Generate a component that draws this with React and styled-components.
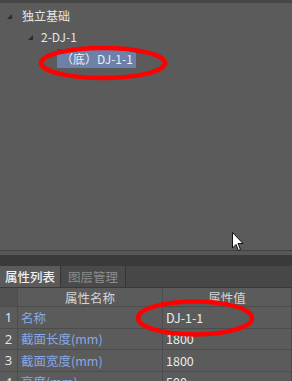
import React from 'react';
import styled, { createGlobalStyle } from 'styled-components';

const GlobalStyle = createGlobalStyle`
  html, body {
    margin: 0;
    padding: 0;
    background: #5b5b5b;
  }
  #root {
    height: 381px;
  }
`;

const Page = styled.div`
  position: relative;
  width: 292px;
  height: 381px;
  display: flex;
  flex-direction: column;
  overflow: hidden;
  font-family: 'Noto Sans CJK SC', 'Open Sans', sans-serif;
  font-size: 12px;
  & > * {
    flex-shrink: 0;
  }
`;

const TreePanel = styled.div`
  height: 250px;
  background: #5b5b5b;
  border-top: 3px solid #474747;
  padding-top: 2px;
  box-sizing: border-box;
`;

const TreeRow = styled.div`
  display: flex;
  align-items: center;
  height: 21px;
  padding-left: ${(p) => p.indent}px;
  color: #e6e6e6;
  white-space: nowrap;
`;

const Toggle = styled.span`
  width: 0;
  height: 0;
  border-left: 5px solid transparent;
  border-bottom: 5px solid #2b2b2b;
  margin-right: ${(p) => p.gap}px;
  margin-top: 2px;
`;

const Selected = styled.span`
  position: relative;
  display: inline-flex;
  align-items: center;
  height: 19px;
  padding: 0 3px 0 4px;
  background: #6c80aa;
  color: #eef0f5;
  margin-top: 2px;
  &::before {
    content: '';
    position: absolute;
    left: 0;
    top: 0;
    width: 6px;
    height: 3px;
    background: #3e4a63;
  }
`;

const Splitter = styled.div`
  height: 16px;
  border-top: 1px solid #424242;
  background: linear-gradient(#575757 0 4px, #3a3a3a 4px);
  box-sizing: border-box;
`;

const TabBar = styled.div`
  display: flex;
  height: 22px;
  background: #474747;
  border-bottom: 1px solid #3a3a3a;
  box-sizing: border-box;
`;

const Tab = styled.div`
  display: flex;
  align-items: center;
  justify-content: center;
  width: ${(p) => p.w}px;
  background: ${(p) => (p.active ? '#5b5b5b' : '#4a4a4a')};
  color: ${(p) => (p.active ? '#f0f0f0' : '#8d8d8d')};
  border-right: 1px solid #353535;
  box-sizing: border-box;
  font-size: 12.5px;
  font-weight: ${(p) => (p.active ? 500 : 400)};
`;

const Grid = styled.div`
  display: grid;
  grid-template-columns: 18px 145px 1fr;
  grid-template-rows: 19px;
  grid-auto-rows: 21.5px;
  background: #5b5b5b;
  font-size: 12.5px;
`;

const HeadCell = styled.div`
  display: flex;
  align-items: center;
  justify-content: center;
  color: #d4d4d4;
  background: ${(p) => (p.corner ? '#525252' : '#5b5b5b')};
  border-right: 1px solid #4c4c4c;
  border-bottom: 1px solid #4c4c4c;
`;

const NumCell = styled.div`
  display: flex;
  align-items: center;
  justify-content: center;
  color: #e8e8e8;
  font-family: 'Open Sans', sans-serif;
  font-size: 13px;
  background: #5b5b5b;
  border-right: 1px solid #4c4c4c;
  border-bottom: 1px solid #4c4c4c;
`;

const Cell = styled.div`
  display: flex;
  align-items: center;
  padding-left: 3px;
  color: ${(p) => (p.name ? '#86a9e6' : '#ececec')};
  border-right: 1px solid #4c4c4c;
  border-bottom: 1px solid #4c4c4c;
  white-space: nowrap;
  overflow: hidden;
`;

const Overlay = styled.svg`
  position: absolute;
  left: 0;
  top: 0;
  pointer-events: none;
`;

const rows = [
  ['1', '名称', 'DJ-1-1'],
  ['2', '截面长度(mm)', '1800'],
  ['3', '截面宽度(mm)', '1800'],
  ['4', '高度(mm)', '500'],
];

export default function App() {
  return (
    <>
      <GlobalStyle />
      <Page>
        <TreePanel>
          <TreeRow indent={7}>
            <Toggle gap={10} />
            独立基础
          </TreeRow>
          <TreeRow indent={28}>
            <Toggle gap={8} />
            2-DJ-1
          </TreeRow>
          <TreeRow indent={57}>
            <Selected>（底）DJ-1-1</Selected>
          </TreeRow>
        </TreePanel>
        <Splitter />
        <TabBar>
          <Tab active w={61}>属性列表</Tab>
          <Tab w={65}>图层管理</Tab>
        </TabBar>
        <Grid>
          <HeadCell corner />
          <HeadCell>属性名称</HeadCell>
          <HeadCell>属性值</HeadCell>
          {rows.map(([n, k, v]) => (
            <React.Fragment key={n}>
              <NumCell>{n}</NumCell>
              <Cell name>{k}</Cell>
              <Cell>{v}</Cell>
            </React.Fragment>
          ))}
        </Grid>
        <Overlay width="292" height="381" viewBox="0 0 292 381">
          <ellipse cx="103" cy="63" rx="62" ry="15" fill="none" stroke="#ff0000" strokeWidth="4.5" />
          <ellipse cx="195" cy="318" rx="57" ry="16.5" fill="none" stroke="#ff0000" strokeWidth="4.5" />
          <path
            d="M232.5 232.5 L232.5 248 L236 244.5 L238.5 250.5 L240.5 249.5 L238 243.5 L243 243.5 Z"
            fill="#ffffff"
            stroke="#111111"
            strokeWidth="1"
            strokeLinejoin="miter"
          />
        </Overlay>
      </Page>
    </>
  );
}
